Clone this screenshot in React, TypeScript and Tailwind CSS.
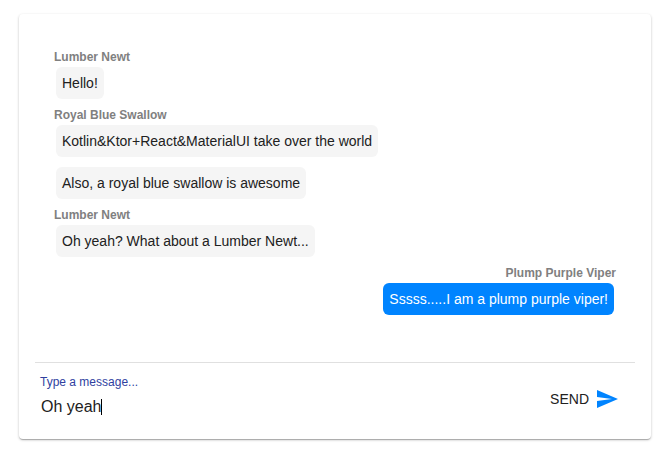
import { useState } from "react";

type Group = { author: string; own?: boolean; messages: string[] };

const groups: Group[] = [
  { author: "Lumber Newt", messages: ["Hello!"] },
  {
    author: "Royal Blue Swallow",
    messages: [
      "Kotlin&Ktor+React&MaterialUI take over the world",
      "Also, a royal blue swallow is awesome",
    ],
  },
  { author: "Lumber Newt", messages: ["Oh yeah? What about a Lumber Newt..."] },
  { author: "Plump Purple Viper", own: true, messages: ["Sssss.....I am a plump purple viper!"] },
];

function MessageGroup({ author, own, messages }: Group) {
  return (
    <section className={own ? "flex flex-col items-end" : "flex flex-col items-start"}>
      <h2 className="text-xs leading-5 font-bold text-[#808080]">{author}</h2>
      <ul className={own ? "flex flex-col items-end gap-2.5 px-0.5" : "flex flex-col items-start gap-2.5 px-0.5"}>
        {messages.map((message) => (
          <li
            key={message}
            className={
              own
                ? "rounded-md bg-[#0084ff] px-1.5 py-1.5 text-sm leading-5 text-white"
                : "rounded-md bg-[#f5f5f5] px-1.5 py-1.5 text-sm leading-5 text-[#212121]"
            }
          >
            {message}
          </li>
        ))}
      </ul>
    </section>
  );
}

export default function App() {
  const [draft, setDraft] = useState("Oh yeah");

  return (
    <main className="px-[19px] py-3.5 font-['Liberation_Sans',Arial,sans-serif]">
      <div className="rounded bg-white px-4 shadow-[0_1px_3px_rgba(0,0,0,0.2),0_1px_1px_rgba(0,0,0,0.14),0_2px_1px_-1px_rgba(0,0,0,0.12)]">
        <div className="flex flex-col gap-1.5 px-[19px] pt-[33px] pb-[47px]">
          {groups.map((group, index) => (
            <MessageGroup key={index} {...group} />
          ))}
        </div>
        <form
          className="flex items-end justify-between border-t border-[#e0e0e0] pt-2.5 pr-4 pb-5 pl-[5px]"
          onSubmit={(event) => event.preventDefault()}
        >
          <div className="flex flex-col">
            <label htmlFor="message" className="text-xs leading-[18px] text-[#303f9f]">
              Type a message...
            </label>
            <div className="flex h-7 items-center pt-1 pl-px">
              <input
                id="message"
                type="text"
                value={draft}
                onChange={(event) => setDraft(event.target.value)}
                className="field-sizing-content bg-transparent text-base leading-6 text-[#212121] caret-transparent outline-none"
              />
              <span aria-hidden="true" className="h-4 w-px bg-black" />
            </div>
          </div>
          <button type="submit" className="flex items-center gap-1.5 pb-2 text-sm leading-6 text-[#212121]">
            SEND
            <svg viewBox="0 0 24 24" className="size-6" fill="#0084ff" aria-hidden="true">
              <path d="M2.01 21L23 12 2.01 3 2 10l15 2-15 2z" />
            </svg>
          </button>
        </form>
      </div>
    </main>
  );
}
